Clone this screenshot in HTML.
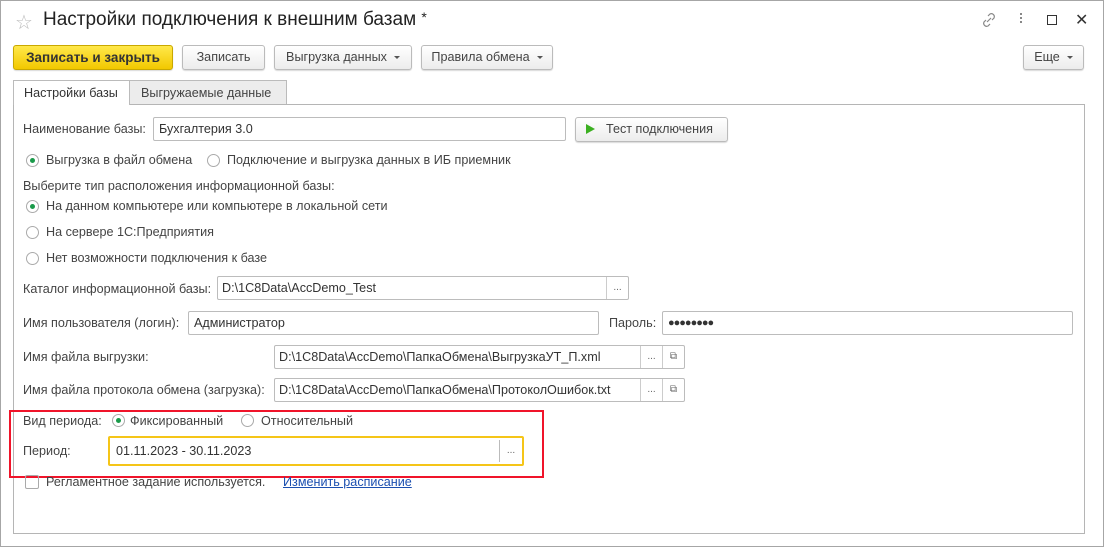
<!DOCTYPE html>
<html><head><meta charset="utf-8"><style>
*{box-sizing:border-box;margin:0;padding:0}
body{width:1104px;height:547px;background:#fff;font-family:"Liberation Sans",Arial,sans-serif;font-size:12.6px;color:#444;position:relative;overflow:hidden}
.a{position:absolute;white-space:nowrap}
.t{position:absolute;white-space:nowrap;line-height:16px}
.btn{position:absolute;height:25px;border:1px solid #bbb;border-radius:3px;background:linear-gradient(#fff,#ececec);box-shadow:0 1px 1px rgba(0,0,0,.15);line-height:23px;text-align:center;color:#444}
.dd:after{content:"";display:inline-block;margin-left:7px;vertical-align:middle;border-left:3px solid transparent;border-right:3px solid transparent;border-top:3px solid #555}
.f{position:absolute;height:24px;border:1px solid #bcbcbc;border-radius:2px;background:#fff;line-height:22px;padding-left:5px;color:#333}
.sec{position:absolute;top:0;bottom:0;width:22px;border-left:1px solid #ccc;text-align:center;font-size:10px;color:#666;line-height:22px}
.r{position:absolute;width:13px;height:13px;border:1px solid #aaa;border-radius:50%;background:#fff}
.r.on:after{content:"";position:absolute;left:3px;top:3px;width:5px;height:5px;border-radius:50%;background:#1a9a4a}
</style></head><body>
<div class="a" style="left:0;top:0;width:1104px;height:547px;border:1px solid #a6a6a6"></div>
<div class="a" style="left:15px;top:10px;font-size:20px;color:#bbb">☆</div>
<div class="a" style="left:43px;top:9px;font-size:19px;color:#222">Настройки подключения к внешним базам <span style="font-size:14px;vertical-align:top">*</span></div>
<svg class="a" style="left:980px;top:11px" width="18" height="18" viewBox="0 0 18 18" fill="none" stroke="#888" stroke-width="1.2"><path d="M8 5l2-2a3 3 0 0 1 4 4l-2 2M10 13l-2 2a3 3 0 0 1-4-4l2-2M7 11l4-4"/></svg>
<div class="a" style="left:1020px;top:13px;width:2px;height:2px;background:#888;box-shadow:0 4px #888,0 8px #888"></div>
<div class="a" style="left:1047px;top:15px;width:10px;height:10px;border:1.3px solid #333"></div>
<div class="a" style="left:1075px;top:10px;font-size:16px;color:#333">✕</div>

<div class="btn" style="left:13px;top:45px;width:160px;background:linear-gradient(#ffe84a,#f2c800);border-color:#c9a800;font-weight:bold;color:#333;font-size:13.5px">Записать и закрыть</div>
<div class="btn" style="left:182px;top:45px;width:83px">Записать</div>
<div class="btn dd" style="left:274px;top:45px;width:138px">Выгрузка данных</div>
<div class="btn dd" style="left:421px;top:45px;width:132px">Правила обмена</div>
<div class="btn dd" style="left:1023px;top:45px;width:61px">Еще</div>

<div class="a" style="left:129px;top:80px;width:158px;height:25px;background:#ececec;border:1px solid #bbb;border-bottom:none;line-height:24px;padding-left:11px">Выгружаемые данные</div>
<div class="a" style="left:13px;top:104px;width:1072px;height:430px;border:1px solid #b5b5b5"></div>
<div class="a" style="left:13px;top:80px;width:117px;height:25px;background:#fff;border:1px solid #bbb;border-bottom:none;line-height:24px;padding-left:10px;color:#333">Настройки базы</div>

<div class="t" style="left:23px;top:121px">Наименование базы:</div>
<div class="f" style="left:153px;top:117px;width:413px">Бухгалтерия 3.0</div>
<div class="btn" style="left:575px;top:117px;width:153px;text-align:left;padding-left:30px">Тест подключения</div>
<div class="a" style="left:586px;top:124px;border-left:9px solid #3cb021;border-top:5px solid transparent;border-bottom:5px solid transparent"></div>

<div class="r on" style="left:26px;top:154px"></div><div class="t" style="left:46px;top:152px">Выгрузка в файл обмена</div>
<div class="r" style="left:207px;top:154px"></div><div class="t" style="left:227px;top:152px">Подключение и выгрузка данных в ИБ приемник</div>

<div class="t" style="left:23px;top:178px">Выберите тип расположения информационной базы:</div>
<div class="r on" style="left:26px;top:200px"></div><div class="t" style="left:46px;top:198px">На данном компьютере или компьютере в локальной сети</div>
<div class="r" style="left:26px;top:226px"></div><div class="t" style="left:46px;top:224px">На сервере 1С:Предприятия</div>
<div class="r" style="left:26px;top:252px"></div><div class="t" style="left:46px;top:250px">Нет возможности подключения к базе</div>

<div class="t" style="left:23px;top:281px">Каталог информационной базы:</div>
<div class="f" style="left:217px;top:276px;width:412px;padding-left:4px">D:\1C8Data\AccDemo_Test<div class="sec" style="right:0">...</div></div>

<div class="t" style="left:23px;top:315px">Имя пользователя (логин):</div>
<div class="f" style="left:188px;top:311px;width:411px">Администратор</div>
<div class="t" style="left:609px;top:315px">Пароль:</div>
<div class="f" style="left:662px;top:311px;width:411px;font-size:11px;letter-spacing:-1px">●●●●●●●●</div>

<div class="t" style="left:23px;top:349px">Имя файла выгрузки:</div>
<div class="f" style="left:274px;top:345px;width:411px;padding-left:4px">D:\1C8Data\AccDemo\ПапкаОбмена\ВыгрузкаУТ_П.xml<div class="sec" style="right:22px">...</div><div class="sec" style="right:0">⧉</div></div>
<div class="t" style="left:23px;top:382px">Имя файла протокола обмена (загрузка):</div>
<div class="f" style="left:274px;top:378px;width:411px;padding-left:4px">D:\1C8Data\AccDemo\ПапкаОбмена\ПротоколОшибок.txt<div class="sec" style="right:22px">...</div><div class="sec" style="right:0">⧉</div></div>

<div class="a" style="left:9px;top:410px;width:535px;height:68px;border:2px solid #f0142a"></div>
<div class="t" style="left:23px;top:413px">Вид периода:</div>
<div class="r on" style="left:112px;top:414px"></div><div class="t" style="left:130px;top:413px">Фиксированный</div>
<div class="r" style="left:241px;top:414px"></div><div class="t" style="left:261px;top:413px">Относительный</div>
<div class="t" style="left:23px;top:443px">Период:</div>
<div class="f" style="left:108px;top:436px;width:416px;height:30px;border:2px solid #f5c518;line-height:26px;padding-left:6px">01.11.2023 - 30.11.2023<div class="sec" style="right:0;width:23px;border-left-color:#bbb;top:2px;bottom:2px;line-height:22px">...</div></div>

<div class="a" style="left:25px;top:475px;width:14px;height:14px;border:1px solid #aaa;border-radius:2px"></div>
<div class="t" style="left:46px;top:474px">Регламентное задание используется.</div>
<div class="t" style="left:283px;top:474px;color:#1b4fb0;text-decoration:underline">Изменить расписание</div>
</body></html>
